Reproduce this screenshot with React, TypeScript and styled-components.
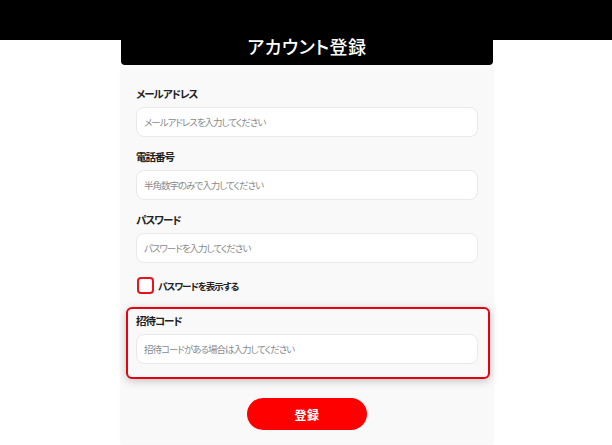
import React from "react";
import styled, { createGlobalStyle } from "styled-components";

const GlobalStyle = createGlobalStyle`
  html, body { margin: 0; padding: 0; background: #ffffff; }
  body {
    font-family: "Noto Sans CJK JP", "Noto Sans", sans-serif;
    font-feature-settings: "palt";
    color: #222;
  }
  * { box-sizing: border-box; }
`;

const Page = styled.div`
  width: 612px;
  min-height: 445px;
  display: flex;
  flex-direction: column;
  align-items: center;
`;

const TopBar = styled.div`
  width: 100%;
  height: 40px;
  background: #000;
`;

const Card = styled.div`
  width: 374px;
  margin-left: 2px;
  display: flex;
  flex-direction: column;
  align-items: stretch;
`;

const CardHeader = styled.div`
  height: 25px;
  margin: 0 1px;
  background: #000;
  border-radius: 0 0 4px 4px;
  display: flex;
  justify-content: center;
  align-items: flex-start;
`;

const Title = styled.h1`
  margin: -3px 0 0 0;
  font-size: 18px;
  line-height: 18px;
  font-weight: 500;
  color: #fff;
  letter-spacing: 0.5px;
`;

const CardBody = styled.div`
  background: #f9f9f9;
  padding: 21px 16px 14px 16px;
  display: flex;
  flex-direction: column;
  box-shadow: 0 1px 2px rgba(0, 0, 0, 0.04);
  border-radius: 0 0 4px 4px;
`;

const Field = styled.div<{ $gap?: number }>`
  display: flex;
  flex-direction: column;
  gap: 5px;
  margin-bottom: ${(p) => p.$gap ?? 12}px;
`;

const Label = styled.label`
  font-size: 10.5px;
  line-height: 16px;
  font-weight: 700;
  letter-spacing: -1px;
  color: #222;
`;

const Input = styled.input`
  width: 100%;
  height: 30px;
  border: 1px solid #e9e9e9;
  border-radius: 8px;
  background: #fff;
  padding: 0 7px;
  font-family: inherit;
  font-feature-settings: "palt";
  font-size: 9.5px;
  letter-spacing: -1px;
  color: #333;
  outline: none;
  &::placeholder {
    color: #8a8a8a;
  }
`;

const CheckRow = styled.label`
  display: flex;
  align-items: center;
  gap: 4px;
  height: 17px;
  margin: 0 0 13px 1px;
  font-size: 9.5px;
  font-weight: 700;
  letter-spacing: -1px;
  color: #222;
`;

const CheckBox = styled.span`
  width: 17px;
  height: 17px;
  border: 2px solid #e8141b;
  border-radius: 4px;
  background: #fff;
`;

const Highlight = styled.div`
  margin: 0 -12px 0 -10px;
  border: 2px solid #e50012;
  border-radius: 6px;
  padding: 4px 10px 13px 8px;
  box-shadow: 0 2px 8px rgba(0, 0, 0, 0.22);
  background: #f9f9f9;
`;

const ButtonRow = styled.div`
  display: flex;
  justify-content: center;
  margin-top: 19px;
`;

const SubmitButton = styled.button`
  width: 120px;
  height: 32px;
  border: none;
  border-radius: 16px;
  background: #ff0000;
  color: #fff;
  font-family: inherit;
  font-size: 12px;
  font-weight: 700;
  letter-spacing: 0.5px;
`;

export default function App() {
  return (
    <Page>
      <GlobalStyle />
      <TopBar />
      <Card>
        <CardHeader>
          <Title>アカウント登録</Title>
        </CardHeader>
        <CardBody>
          <Field>
            <Label>メールアドレス</Label>
            <Input placeholder="メールアドレスを入力してください" />
          </Field>
          <Field>
            <Label>電話番号</Label>
            <Input placeholder="半角数字のみで入力してください" />
          </Field>
          <Field $gap={14}>
            <Label>パスワード</Label>
            <Input type="password" placeholder="パスワードを入力してください" />
          </Field>
          <CheckRow>
            <CheckBox />
            パスワードを表示する
          </CheckRow>
          <Highlight>
            <Field $gap={0}>
              <Label>招待コード</Label>
              <Input placeholder="招待コードがある場合は入力してください" />
            </Field>
          </Highlight>
          <ButtonRow>
            <SubmitButton>登録</SubmitButton>
          </ButtonRow>
        </CardBody>
      </Card>
    </Page>
  );
}
